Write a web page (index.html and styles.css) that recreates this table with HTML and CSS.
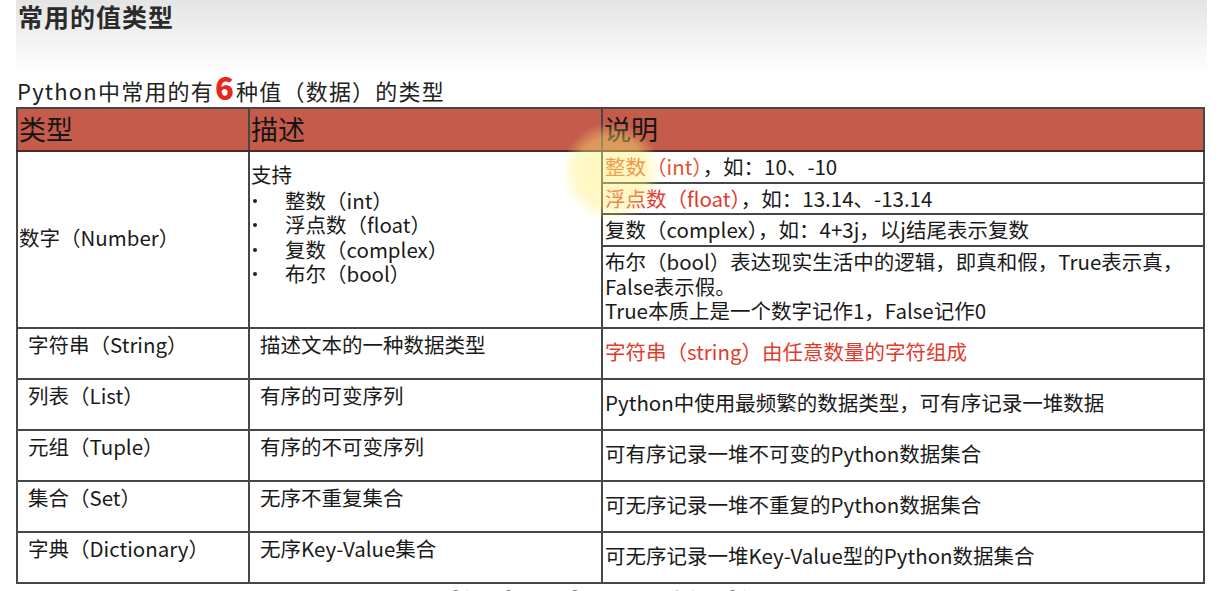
FILE: index.html
```html
<!DOCTYPE html>
<html lang="zh">
<head>
<meta charset="utf-8">
<title>常用的值类型</title>
<link rel="stylesheet" href="styles.css">
</head>
<body>
<div class="slide">
  <div class="band">
    <h1 class="title">常用的值类型</h1>
  </div>
  <p class="subtitle">Python中常用的有<span class="six">6</span>种值（数据）的类型</p>
  <table class="types">
    <colgroup>
      <col class="c1"><col class="c2"><col class="c3">
    </colgroup>
    <thead>
      <tr class="head">
        <th>类型</th><th>描述</th><th>说明</th>
      </tr>
    </thead>
    <tbody>
      <tr class="sub">
        <td rowspan="4" class="name">数字（Number）</td>
        <td rowspan="4" class="desc">
          <div>支持</div>
          <ul class="bul">
            <li>整数（int）</li>
            <li>浮点数（float）</li>
            <li>复数（complex）</li>
            <li>布尔（bool）</li>
          </ul>
        </td>
        <td class="note"><span class="red1">整数（int）</span>，如：10、-10</td>
      </tr>
      <tr class="sub2">
        <td class="note"><span class="red2">浮点数（float）</span>，如：13.14、-13.14</td>
      </tr>
      <tr class="sub">
        <td class="note">复数（complex），如：4+3j，以j结尾表示复数</td>
      </tr>
      <tr class="bool">
        <td class="note">布尔（bool）表达现实生活中的逻辑，即真和假，True表示真，False表示假。<br>True本质上是一个数字记作1，False记作0</td>
      </tr>
      <tr class="row">
        <td class="name2">字符串（String）</td>
        <td class="desc2">描述文本的一种数据类型</td>
        <td class="note red2">字符串（string）由任意数量的字符组成</td>
      </tr>
      <tr class="row">
        <td class="name2">列表（List）</td>
        <td class="desc2">有序的可变序列</td>
        <td class="note">Python中使用最频繁的数据类型，可有序记录一堆数据</td>
      </tr>
      <tr class="row">
        <td class="name2">元组（Tuple）</td>
        <td class="desc2">有序的不可变序列</td>
        <td class="note">可有序记录一堆不可变的Python数据集合</td>
      </tr>
      <tr class="row">
        <td class="name2">集合（Set）</td>
        <td class="desc2">无序不重复集合</td>
        <td class="note">可无序记录一堆不重复的Python数据集合</td>
      </tr>
      <tr class="row">
        <td class="name2">字典（Dictionary）</td>
        <td class="desc2">无序Key-Value集合</td>
        <td class="note">可无序记录一堆Key-Value型的Python数据集合</td>
      </tr>
    </tbody>
  </table>
  <p class="next">数据类型转换</p>
  <div class="spot"></div>
</div>
</body>
</html>
```

FILE: styles.css
```css
html, body {
  margin: 0;
  padding: 0;
  background: #ffffff;
}
body {
  font-family: "Noto Sans CJK SC", "Noto Sans", sans-serif;
  color: #1a1a1a;
  overflow: hidden;
}
.slide {
  position: relative;
  margin-left: 16px;
  width: 1191px;
}
.band {
  height: 75px;
  background: linear-gradient(#e4e4e4, #f3f3f3 55%, #ffffff);
}
.title {
  margin: 0;
  padding: 0 0 0 2px;
  font-size: 25px;
  line-height: 32px;
  font-weight: 700;
  color: #2b2b2b;
  letter-spacing: 1px;
}
.subtitle {
  margin: 0 0 2px 0;
  padding-left: 1px;
  font-size: 22px;
  line-height: 30px;
  color: #222;
  letter-spacing: 1.2px;
}
.six {
  color: #e8271c;
  font-weight: 900;
  font-size: 31px;
  line-height: 20px;
  margin: 0 1px;
}
.types {
  border-collapse: collapse;
  table-layout: fixed;
  width: 1187px;
  font-size: 20.5px;
  line-height: 24.5px;
}
.c1 { width: 232px; }
.c2 { width: 353px; }
.c3 { width: 602px; }
.types th, .types td {
  border: 2px solid #474747;
  padding: 0;
}
.head {
  height: 43px;
  background: #c55b4b;
}
.types .head th {
  text-align: left;
  font-weight: 400;
  font-size: 27px;
  color: #151515;
  padding-left: 1px;
  vertical-align: middle;
  border-bottom: 2px solid #4a2a24;
}
.sub { height: 32px; }
.sub2 { height: 31px; }
.bool { height: 82px; }
.row { height: 51px; }
.types td.name {
  padding: 0 0 4px 1px;
  vertical-align: middle;
}
.types td.desc {
  vertical-align: top;
  padding: 10px 0 0 1px;
}
.desc .bul {
  list-style: none;
  margin: 1px 0 0 0;
  padding: 0;
}
.bul li {
  position: relative;
  padding-left: 34px;
}
.bul li::before {
  content: "";
  position: absolute;
  left: 2px;
  top: 11px;
  width: 4px;
  height: 4px;
  border-radius: 50%;
  background: #222;
}
.types td.note {
  padding: 0 0 1px 2px;
  vertical-align: middle;
}
.types .bool td.note {
  padding: 2px 4px 4px 2px;
}
.types td.name2,
.types td.desc2 {
  vertical-align: top;
  padding: 3px 0 0 10px;
}
.types .row td.note {
  padding-bottom: 4px;
}
.red1 { color: #e2542a; }
.red2 { color: #e23a2c; }
.types td.red2 { color: #e23a2c; }
.next {
  margin: 2px 0 0 430px;
  font-size: 34px;
  line-height: 40px;
  font-weight: 700;
  letter-spacing: 22px;
  color: #222;
}
.spot {
  position: absolute;
  left: 545px;
  top: 122px;
  width: 100px;
  height: 100px;
  border-radius: 50%;
  background: radial-gradient(circle, rgba(255, 238, 120, 0.5) 0%, rgba(255, 238, 120, 0.4) 50%, rgba(255, 238, 120, 0) 70%);
  pointer-events: none;
}
```
